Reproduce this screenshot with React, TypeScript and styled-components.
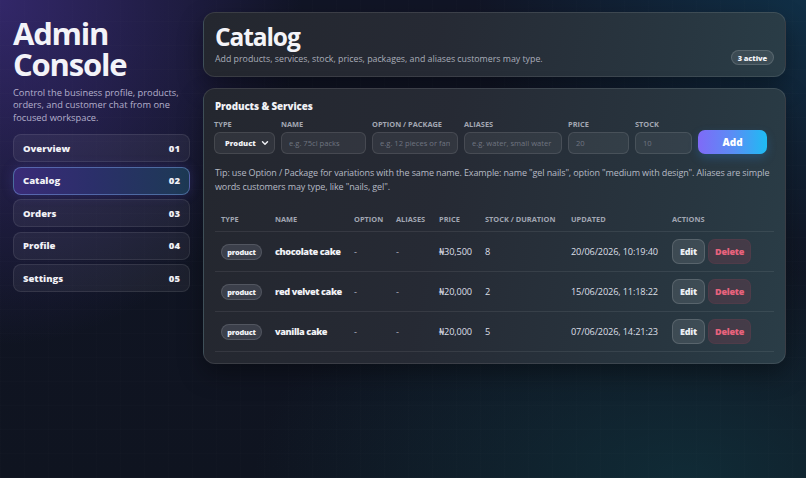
import styled, { createGlobalStyle } from "styled-components";

const GlobalStyle = createGlobalStyle`
  * { box-sizing: border-box; }
  html, body { margin: 0; padding: 0; }
  body {
    font-family: "Open Sans", "Noto Sans", sans-serif;
    color: #eef0f6;
    background: #0f1422;
  }
`;

const Page = styled.div`
  display: grid;
  grid-template-columns: 177px 1fr;
  gap: 13px;
  align-items: start;
  min-height: 100vh;
  padding: 12px 21px 12px 13px;
  background:
    repeating-linear-gradient(90deg, rgba(255,255,255,0.008) 0 1px, transparent 1px 24px),
    repeating-linear-gradient(0deg, rgba(255,255,255,0.008) 0 1px, transparent 1px 24px),
    radial-gradient(ellipse 420px 480px at 0% 0%, rgba(78,54,160,0.55), transparent 72%),
    radial-gradient(ellipse 460px 380px at 100% 0%, rgba(16,80,110,0.45), transparent 72%),
    radial-gradient(ellipse 600px 340px at 85% 100%, rgba(18,66,76,0.5), transparent 72%),
    linear-gradient(180deg, #111526 0%, #0f1420 100%);
`;

const Sidebar = styled.aside`
  display: flex;
  flex-direction: column;
  padding-top: 6px;
`;

const BrandTitle = styled.h1`
  margin: 0;
  font-size: 31px;
  line-height: 31px;
  font-weight: 700;
  letter-spacing: -1.2px;
  color: #f3f3f8;
`;

const BrandText = styled.p`
  margin: 7px 0 0;
  font-size: 9.3px;
  line-height: 12.4px;
  color: #b4b0cc;
`;

const Nav = styled.nav`
  display: flex;
  flex-direction: column;
  gap: 4.5px;
  margin-top: 10px;
`;

const NavItem = styled.div<{ $active?: boolean }>`
  height: 28px;
  display: flex;
  align-items: center;
  justify-content: space-between;
  padding: 0 9px;
  border-radius: 8px;
  font-size: 9.5px;
  font-weight: 800;
  color: #f1f1f6;
  border: 1px solid ${(p) => (p.$active ? "rgba(120,160,230,0.5)" : "rgba(255,255,255,0.09)")};
  background: ${(p) =>
    p.$active
      ? "linear-gradient(90deg, #3a2b78 0%, #2b2f6a 45%, #1d3a55 100%)"
      : "rgba(255,255,255,0.055)"};
  box-shadow: ${(p) => (p.$active ? "0 0 12px rgba(90,80,200,0.25)" : "none")};
`;

const Main = styled.main`
  display: flex;
  flex-direction: column;
  gap: 11px;
`;

const Card = styled.section`
  border-radius: 12px;
  border: 1px solid rgba(255,255,255,0.1);
  background: linear-gradient(100deg, #24272f 0%, #262a34 40%, #283640 80%, #2a3d47 100%);
  box-shadow: 0 10px 24px rgba(0,0,0,0.35);
`;

const HeaderCard = styled(Card)`
  display: flex;
  align-items: flex-end;
  justify-content: space-between;
  padding: 9px 11px 11px;
  height: 65px;
`;

const HeaderText = styled.div`
  display: flex;
  flex-direction: column;
`;

const PageTitle = styled.h2`
  margin: 0;
  font-size: 24.5px;
  line-height: 28px;
  font-weight: 700;
  letter-spacing: -1.1px;
  color: #f4f4f8;
`;

const PageSub = styled.p`
  margin: 2px 0 0;
  font-size: 8.8px;
  line-height: 12px;
  color: #a9adb9;
`;

const Pill = styled.span`
  display: inline-flex;
  align-items: center;
  justify-content: center;
  height: 15px;
  padding: 0 6px;
  border-radius: 999px;
  font-size: 7.5px;
  font-weight: 800;
  color: #f1f2f6;
  background: rgba(255,255,255,0.09);
  border: 1px solid rgba(255,255,255,0.14);
  letter-spacing: -0.1px;
`;

const CatalogCard = styled(Card)`
  padding: 11px 11px 11px;
`;

const SectionTitle = styled.h3`
  margin: 0;
  font-size: 9.8px;
  line-height: 13px;
  font-weight: 800;
  color: #f1f2f6;
  letter-spacing: -0.1px;
`;

const FormRow = styled.div`
  display: flex;
  align-items: flex-end;
  gap: 6px;
  margin-top: 6px;
  margin-left: -1px;
`;

const Field = styled.label<{ $w: number }>`
  display: flex;
  flex-direction: column;
  gap: 3px;
  width: ${(p) => p.$w}px;
`;

const FieldLabel = styled.span`
  font-size: 7.4px;
  line-height: 10px;
  font-weight: 700;
  text-transform: uppercase;
  color: #a3a7b2;
`;

const Input = styled.input`
  width: 100%;
  height: 22px;
  padding: 0 7px;
  border-radius: 6px;
  border: 1px solid rgba(255,255,255,0.1);
  background: rgba(255,255,255,0.06);
  color: #e8eaf0;
  font-family: inherit;
  font-size: 7.6px;
  outline: none;
  &::placeholder { color: #6f7480; }
`;

const Select = styled.div`
  height: 22px;
  display: flex;
  align-items: center;
  justify-content: space-between;
  padding: 0 4px 0 10px;
  border-radius: 6px;
  border: 1px solid rgba(255,255,255,0.1);
  background: rgba(255,255,255,0.06);
  font-size: 7.6px;
  font-weight: 800;
  color: #f1f2f6;
`;

const AddButton = styled.button`
  width: 69px;
  height: 24px;
  border: none;
  border-radius: 7px;
  background: linear-gradient(90deg, #7f6af7 0%, #5a8df5 50%, #1ebcf3 100%);
  color: #ffffff;
  font-family: inherit;
  font-size: 10px;
  font-weight: 800;
  box-shadow: 0 4px 10px rgba(40,140,230,0.25);
`;

const Tip = styled.p`
  margin: 12px 0 0;
  font-size: 9px;
  line-height: 13.5px;
  color: #b6bac5;
  letter-spacing: -0.12px;
`;

const Table = styled.table`
  width: 100%;
  margin-top: 21px;
  border-collapse: collapse;
  table-layout: fixed;
`;

const Th = styled.th<{ $w: number }>`
  width: ${(p) => p.$w}px;
  padding: 0 6px 7px;
  text-align: left;
  font-size: 7.4px;
  font-weight: 700;
  text-transform: uppercase;
  color: #a1a6b2;
  white-space: nowrap;
  border-bottom: 1px solid rgba(255,255,255,0.08);
`;

const Td = styled.td<{ $strong?: boolean; $muted?: boolean }>`
  height: 40px;
  padding: 0 6px;
  font-size: 9.2px;
  font-weight: ${(p) => (p.$strong ? 800 : 400)};
  color: ${(p) => (p.$muted ? "#b8bcc6" : p.$strong ? "#f1f2f6" : "#dcdfe6")};
  white-space: nowrap;
  border-bottom: 1px solid rgba(255,255,255,0.08);
  letter-spacing: ${(p) => (p.$strong ? "-0.4px" : "-0.15px")};
`;

const TypeBadge = styled.span`
  display: inline-flex;
  align-items: center;
  justify-content: center;
  height: 16px;
  width: 41px;
  border-radius: 999px;
  font-size: 7.4px;
  font-weight: 800;
  color: #f1f2f6;
  background: #3b3f4a;
  border: 1px solid rgba(255,255,255,0.12);
  letter-spacing: -0.2px;
`;

const Actions = styled.div`
  display: flex;
  align-items: center;
  gap: 3px;
`;

const ActionButton = styled.button<{ $danger?: boolean }>`
  height: 25px;
  padding: 0 ${(p) => (p.$danger ? "6px" : "7px")};
  border-radius: 7px;
  font-family: inherit;
  font-size: 9px;
  font-weight: 800;
  color: ${(p) => (p.$danger ? "#e8627c" : "#eef0f5")};
  background: ${(p) => (p.$danger ? "rgba(214,70,96,0.16)" : "rgba(255,255,255,0.1)")};
  border: 1px solid ${(p) => (p.$danger ? "rgba(214,70,96,0.08)" : "rgba(255,255,255,0.14)")};
  letter-spacing: -0.2px;
`;

const Chevron = () => (
  <svg width="10" height="10" viewBox="0 0 24 24" fill="none" stroke="#f1f2f6" strokeWidth="3.4" strokeLinecap="round" strokeLinejoin="round">
    <path d="M6 9l6 6 6-6" />
  </svg>
);

const navItems = ["Overview", "Catalog", "Orders", "Profile", "Settings"];

const products = [
  { name: "chocolate cake", price: "₦30,500", stock: "8", updated: "20/06/2026, 10:19:40" },
  { name: "red velvet cake", price: "₦20,000", stock: "2", updated: "15/06/2026, 11:18:22" },
  { name: "vanilla cake", price: "₦20,000", stock: "5", updated: "07/06/2026, 14:21:23" },
];

export default function App() {
  return (
    <>
      <GlobalStyle />
      <Page>
        <Sidebar>
          <BrandTitle>
            Admin
            <br />
            Console
          </BrandTitle>
          <BrandText>Control the business profile, products, orders, and customer chat from one focused workspace.</BrandText>
          <Nav>
            {navItems.map((item, i) => (
              <NavItem key={item} $active={item === "Catalog"}>
                <span>{item}</span>
                <span>{String(i + 1).padStart(2, "0")}</span>
              </NavItem>
            ))}
          </Nav>
        </Sidebar>

        <Main>
          <HeaderCard>
            <HeaderText>
              <PageTitle>Catalog</PageTitle>
              <PageSub>Add products, services, stock, prices, packages, and aliases customers may type.</PageSub>
            </HeaderText>
            <Pill>3 active</Pill>
          </HeaderCard>

          <CatalogCard>
            <SectionTitle>Products &amp; Services</SectionTitle>
            <FormRow>
              <Field $w={61}>
                <FieldLabel>Type</FieldLabel>
                <Select>
                  <span>Product</span>
                  <Chevron />
                </Select>
              </Field>
              <Field $w={85}>
                <FieldLabel>Name</FieldLabel>
                <Input placeholder="e.g. 75cl packs" />
              </Field>
              <Field $w={86}>
                <FieldLabel>Option / Package</FieldLabel>
                <Input placeholder="e.g. 12 pieces or family size" />
              </Field>
              <Field $w={98}>
                <FieldLabel>Aliases</FieldLabel>
                <Input placeholder="e.g. water, small water" />
              </Field>
              <Field $w={61}>
                <FieldLabel>Price</FieldLabel>
                <Input placeholder="20" />
              </Field>
              <Field $w={57}>
                <FieldLabel>Stock</FieldLabel>
                <Input placeholder="10" />
              </Field>
              <AddButton>Add</AddButton>
            </FormRow>

            <Tip>
              Tip: use Option / Package for variations with the same name. Example: name "gel nails", option "medium with design". Aliases are simple words customers may type, like "nails, gel".
            </Tip>

            <Table>
              <thead>
                <tr>
                  <Th $w={54}>Type</Th>
                  <Th $w={79}>Name</Th>
                  <Th $w={42}>Option</Th>
                  <Th $w={43}>Aliases</Th>
                  <Th $w={46}>Price</Th>
                  <Th $w={86}>Stock / Duration</Th>
                  <Th $w={101}>Updated</Th>
                  <Th $w={108}>Actions</Th>
                </tr>
              </thead>
              <tbody>
                {products.map((p) => (
                  <tr key={p.name}>
                    <Td>
                      <TypeBadge>product</TypeBadge>
                    </Td>
                    <Td $strong>{p.name}</Td>
                    <Td $muted>-</Td>
                    <Td $muted>-</Td>
                    <Td>{p.price}</Td>
                    <Td>{p.stock}</Td>
                    <Td>{p.updated}</Td>
                    <Td>
                      <Actions>
                        <ActionButton>Edit</ActionButton>
                        <ActionButton $danger>Delete</ActionButton>
                      </Actions>
                    </Td>
                  </tr>
                ))}
              </tbody>
            </Table>
          </CatalogCard>
        </Main>
      </Page>
    </>
  );
}
